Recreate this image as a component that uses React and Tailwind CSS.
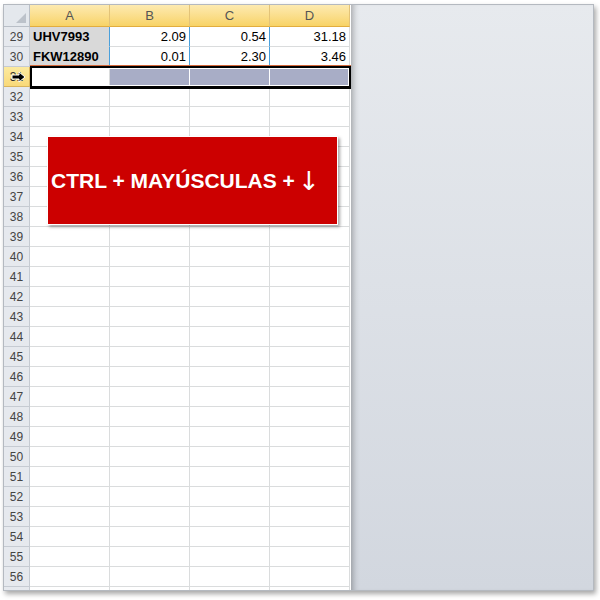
import React from 'react';

const ROWS = [];
for (let r = 29; r <= 57; r++) ROWS.push(r);

const DATA = {
  29: ['UHV7993', '2.09', '0.54', '31.18'],
  30: ['FKW12890', '0.01', '2.30', '3.46'],
};

const font = { fontFamily: '"Liberation Sans", Arial, sans-serif' };

const RowHeader = ({ n, active }) => (
  <div
    className={`relative h-[20px] flex items-center justify-center border-b border-r text-[12px] ${
      active ? 'bg-gradient-to-b from-[#fcea9f] to-[#f9d978] border-[#d9b45c] text-[#333]' : 'bg-[#e6e9ee] border-[#c6cbd2] text-[#444]'
    }`}
  >
    {n < 57 ? n : ''}
    {active && (
      <svg className="absolute left-[7px] top-[4px]" width="15" height="12" viewBox="0 0 15 12">
        <path d="M1 4h7V1l6 5-6 5V8H1z" fill="#000" stroke="#fff" strokeWidth="1" />
      </svg>
    )}
  </div>
);

const DataRow = ({ n }) => {
  const d = DATA[n];
  if (d) {
    return (
      <>
        <RowHeader n={n} />
        <div className="h-[20px] bg-[#d9d9d9] border-r border-r-[#4aa0dc] border-b border-b-[#d9d9d9] pl-[3px] flex items-center text-[13px] font-bold text-black">
          {d[0]}
        </div>
        {d.slice(1).map((v, i) => (
          <div
            key={i}
            className={`h-[20px] border-b border-[#dadcdd] border-r ${i < 2 ? 'border-r-[#4aa0dc]' : 'border-r-[#dadcdd]'} pr-[3px] flex items-center justify-end text-[13px] text-black`}
          >
            {v}
          </div>
        ))}
      </>
    );
  }
  if (n === 31) {
    return (
      <>
        <RowHeader n={n} active />
        <div className="h-[20px] bg-white border-r border-b border-[#dadcdd]" />
        <div className="h-[20px] bg-[#a8adc6] border-r border-white" />
        <div className="h-[20px] bg-[#a8adc6] border-r border-white" />
        <div className="h-[20px] bg-[#a8adc6] border-r border-white" />
      </>
    );
  }
  return (
    <>
      <RowHeader n={n} />
      <div className="h-[20px] bg-white border-r border-b border-[#dadcdd]" />
      <div className="h-[20px] bg-white border-r border-b border-[#dadcdd]" />
      <div className="h-[20px] bg-white border-r border-b border-[#dadcdd]" />
      <div className="h-[20px] bg-white border-r border-b border-[#dadcdd]" />
    </>
  );
};

export default function App() {
  return (
    <div className="w-[600px] h-[600px] bg-white pt-[4px] pl-[3px]" style={font}>
      <div className="relative w-[591px] h-[587px] border border-[#b4b9c0] flex overflow-hidden shadow-[2px_3px_5px_rgba(0,0,0,0.35)]">
        {/* sheet */}
        <div className="w-[347px] shrink-0 bg-white">
          <div className="grid grid-cols-[26px_80px_80px_80px_80px]">
            <div className="h-[22px] bg-[#e4e8ed] border-r border-b border-[#b9bfc7] relative">
              <svg className="absolute right-[3px] bottom-[3px]" width="10" height="10" viewBox="0 0 10 10">
                <path d="M10 0V10H0z" fill="#bcc2ca" />
              </svg>
            </div>
            {['A', 'B', 'C', 'D'].map((c) => (
              <div
                key={c}
                className="h-[22px] bg-gradient-to-b from-[#fdeab0] to-[#f8d365] border-r border-r-[#e3c378] border-b border-b-[#e2ad3e] flex items-center justify-center text-[13px] text-[#555]"
              >
                {c}
              </div>
            ))}
            {ROWS.map((n) => (
              <DataRow key={n} n={n} />
            ))}
          </div>
        </div>

        {/* empty area */}
        <div className="flex-1 bg-gradient-to-b from-[#e7eaee] to-[#d2d7df] shadow-[inset_7px_0_6px_-5px_rgba(0,0,0,0.3)]" />

        {/* selection outline on row 31 */}
        <div className="absolute left-[26px] top-[61px] w-[321px] h-[23px] border-2 border-b-[3px] border-black shadow-[inset_0_0_0_1px_#fff,0_-1px_0_#d5693b]" />

        {/* callout */}
        <div className="absolute left-[43px] top-[131px] w-[291px] h-[89px] bg-[#cc0000] border border-white shadow-[2px_2px_3px_rgba(0,0,0,0.35)] flex items-center pl-[3px]">
          <span className="text-white font-bold text-[21px] whitespace-nowrap">CTRL + MAYÚSCULAS + </span>
          <span className="text-white text-[26px] ml-[3px] leading-none" style={{ fontFamily: '"DejaVu Sans", sans-serif' }}>↓</span>
        </div>
      </div>
    </div>
  );
}
